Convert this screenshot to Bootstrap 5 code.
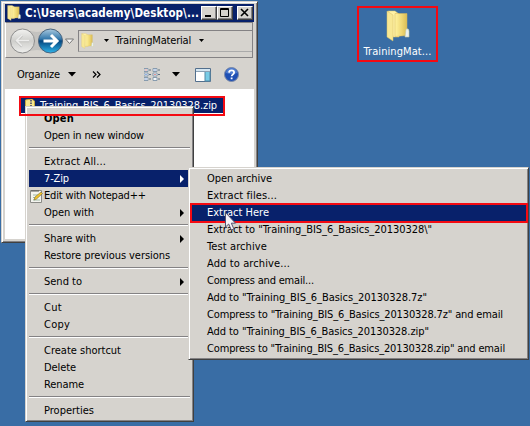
<!DOCTYPE html>
<html lang="en">
<head>
<meta charset="utf-8">
<meta name="viewport" content="width=device-width, initial-scale=1">
<title>Desktop</title>
<link href="https://cdn.jsdelivr.net/npm/bootstrap@5.3.0/dist/css/bootstrap.min.css" rel="stylesheet">
<style>
:root{--face:#d6d3ce;--navy:#08216b;--hot:#f40a12}
body{width:530px;height:426px;background:#396da5;color:#000;font:11px/17px "DejaVu Sans Condensed","DejaVu Sans",sans-serif;font-stretch:condensed;cursor:default}
svg{display:block;flex:none}
.t{white-space:nowrap;display:inline-block}
.explorer{left:1px;top:1px;width:257px;height:242px;background:var(--face);border:1px solid;border-color:#d6d3ce #404040 #404040 #d6d3ce;box-shadow:inset 1px 1px #fff,inset -1px -1px #848284;padding:2px 3px 3px 3px}
.titlebar{height:18px;background:var(--navy);color:#fff;font-weight:700;font-size:11.5px;padding:0 1px 0 2px}
.wbtn{width:16px;height:14px;background:var(--face);border:1px solid;border-color:#fff #404040 #404040 #fff;box-shadow:inset -1px -1px #848284}
.navrow{height:36px;border:1px solid;border-color:#848284 #848284 #848284 #fff;padding-left:3px;margin-right:1px;padding-top:1px}
.address{height:22px;border:1px solid #848284;border-right:0;border-bottom-color:#aaa;padding-left:2px}
.tools{height:31px;padding:2px 15px 0 12px}
.tools .view-arrow{margin:0 15px 0 12px}
.tools .pane{margin-right:13px}
.files{background:#fff;flex:1;padding:8px 0 0 16px}
.picked{width:202px;height:16px;background:var(--navy);color:#fff;line-height:16px;padding-top:2px}
.redframe{border:2px solid var(--hot);z-index:5}
.popup{background:var(--face);border:1px solid;border-color:#d6d3ce #404040 #404040 #d6d3ce;box-shadow:inset 1px 1px #fff,inset -1px -1px #848284;padding:3px 3px 2px}
.context{left:25px;top:106px;width:169px;height:316px}
.sub{left:188px;top:167px;width:341px;height:193px;z-index:2;padding:2px 2px 2px 3px}
.entry{height:17px;padding-left:15px;padding-right:5px;flex:none}
.entry.hot{background:var(--navy);color:#fff}
.rule{height:9px;padding-top:3px;flex:none}
.rule::before{content:"";display:block;height:2px;background:#848284;border-bottom:1px solid #fff}
.note{margin-left:-14px;margin-right:1px}
.shortcut{left:357px;top:6px;width:81px;height:56px;color:#fff;padding-top:2px}
.shortcut .t{margin-top:1px}
.pointer{left:224px;top:211px;z-index:6}
.pick-frame{left:19px;top:96px;width:206px;height:20px}
.row-frame{left:190px;top:203px;width:338px;height:20px}
</style>
<script src="https://cdn.jsdelivr.net/npm/bootstrap@5.3.0/dist/js/bootstrap.bundle.min.js"></script>
</head>
<body class="position-relative overflow-hidden m-0">
<svg width="0" height="0" class="position-absolute">
  <defs>
    <linearGradient id="gold" x1="0" x2="1"><stop offset="0" stop-color="#fff3a0"/><stop offset=".55" stop-color="#efd875"/><stop offset="1" stop-color="#d9bd55"/></linearGradient>
    <linearGradient id="blue" x1="0" y1="0" x2="0" y2="1"><stop offset="0" stop-color="#a9c9df"/><stop offset=".42" stop-color="#3277ab"/><stop offset=".5" stop-color="#064780"/><stop offset="1" stop-color="#2fb4ea"/></linearGradient>
    <linearGradient id="pale" x1="0" y1="0" x2="0" y2="1"><stop offset="0" stop-color="#f3f3f1"/><stop offset=".5" stop-color="#cfcfcc"/><stop offset="1" stop-color="#efefed"/></linearGradient>
    <symbol id="folder" viewBox="0 0 24 32" preserveAspectRatio="none">
      <path d="M2 1h7l4 3v23H7z" fill="#fff2a6" stroke="#d8c06a" stroke-width=".5"/>
      <path d="M9 3.500h12v22l-12 1z" fill="url(#gold)" stroke="#d3b55c" stroke-width=".5"/>
      <path d="M1 1l6 4v26l-6-4z" fill="#f8e894" stroke="#d8c06a" stroke-width=".5"/>
      <path d="M20 19q3-1 3 2v6h-4z" fill="#e8f2f4" stroke="#c7c79a" stroke-width=".6"/>
    </symbol>
  </defs>
</svg>

<main>
<section class="explorer position-absolute d-flex flex-column">
  <header class="titlebar d-flex align-items-center">
    <svg width="14" height="16"><use href="#folder"/></svg>
    <span class="t ms-1" data-w="174">C:\Users\academy\Desktop\...</span>
    <div class="d-flex ms-auto">
      <div class="wbtn"><svg width="14" height="12"><path d="M3 8h6v2H3z"/></svg></div>
      <div class="wbtn"><svg width="14" height="12"><path d="M2.500 1.500h8v8h-8zM2 2.500h9" fill="none" stroke="#000"/></svg></div>
      <div class="wbtn ms-1"><svg width="14" height="12"><path d="M3 2l7 7M10 2l-7 7" stroke="#000" stroke-width="1.600"/></svg></div>
    </div>
  </header>
  <nav class="navrow d-flex align-items-center">
    <svg width="69" height="30" viewBox="0 0 69 30">
      <path d="M14 3q14 6 28 0v24q-14-6-28 0z" fill="#c3c2bf"/>
      <circle cx="13.500" cy="15" r="12" fill="url(#pale)" stroke="#8d8d8d"/>
      <path d="M20 15H8m5-5.500L7.500 15l5.500 5.500" fill="none" stroke="#c2c2c0" stroke-width="2.500"/>
      <path d="M20 14.500H8m5-5.500l-5.500 5.500 5.500 5.500" fill="none" stroke="#ededec" stroke-width="1.600"/>
      <circle cx="41.500" cy="15" r="12" fill="url(#blue)" stroke="#47627d"/>
      <path d="M34.500 15H47m-5-6l6 6-6 6" fill="none" stroke="#fff" stroke-width="3"/>
      <path d="M56.500 13h8l-4 4.500z" fill="#f8f8f8" stroke="#777"/>
    </svg>
    <div class="address d-flex align-items-center flex-fill">
      <svg width="13" height="16"><use href="#folder"/></svg>
      <svg class="ms-2" width="9" height="4" viewBox="-2 0 9 4"><path d="M0 0h5L2.500 3z"/></svg>
      <span class="t ms-1" data-w="76">TrainingMaterial</span>
      <svg class="ms-2" width="5" height="4"><path d="M0 0h5L2.500 3z"/></svg>
    </div>
  </nav>
  <div class="tools d-flex align-items-center">
    <span class="t" data-w="43">Organize</span>
    <svg class="ms-2 me-3" width="8" height="5"><path d="M0 0h8L4 4.500z"/></svg>
    <svg width="9" height="7"><path d="M1 .5l3 3-3 3M5 .5l3 3-3 3" fill="none" stroke="#000" stroke-width="1.200"/></svg>
    <svg class="ms-auto" width="16" height="13">
      <path d="M0 .5h4v3H0zm0 4.500h4v3H0zm0 4.500h4v3H0zM9 .5h4v3H9zM9 5h4v3H9zm0 4.500h4v3H9z" fill="#f4f7fa" stroke="#7d93a8" stroke-width=".9"/>
      <path d="M5 2h2M5 6.500h2M5 11h2M14 2h2M14 6.500h2M14 11h2" stroke="#5b7286"/>
      <path d="M1.500 2h1M10.500 6.500h1" stroke="#c33"/><path d="M1.500 6.500h1M10.500 2h1M1.500 11h1" stroke="#36c"/>
    </svg>
    <svg class="view-arrow" width="8" height="5"><path d="M0 0h8L4 4.500z"/></svg>
    <svg class="pane" width="16" height="14"><path d="M.5.5h15v13H.5z" fill="#fff" stroke="#526f8d"/><path d="M1 1h14v2H1z" fill="#d5e6f1"/><path d="M10 3.500h5v9.500h-5z" fill="#78cbe5" stroke="#5489a5"/><path d="M1 3.500h14" stroke="#8aa0b4"/></svg>
    <svg width="15" height="15"><circle cx="7.500" cy="7.500" r="7" fill="#1f50b4" stroke="#7b8aa8"/><path d="M2 6a5.500 5 0 0 1 11 0q-5 2-11 0" fill="#6f9be4" opacity=".6"/><path d="M5 5.700q.2-2.300 2.600-2.300 2.500 0 2.500 2 0 1.200-1.300 2-1.100.7-1.100 1.800M7.600 10.500v1.700" fill="none" stroke="#fff" stroke-width="1.800"/></svg>
  </div>
  <div class="files">
    <div class="picked d-flex align-items-center">
      <svg class="ms-1" width="11" height="15"><path d="M.5 1l6-1 3 2v12l-5 1-4-2z" fill="#f8e78d" stroke="#c4a642"/><path d="M6 1v13" stroke="#667" stroke-dasharray="1.500 1" stroke-width="2"/></svg>
      <span class="t ms-1" data-w="177">Training_BIS_6_Basics_20130328.zip</span>
    </div>
  </div>
</section>

<div class="redframe position-absolute pick-frame"></div>

<div class="context popup position-absolute d-flex flex-column">
  <div class="entry fw-bold"><span class="t" data-w="30">Open</span></div>
  <div class="entry"><span class="t" data-w="100">Open in new window</span></div>
  <div class="rule"></div>
  <div class="entry"><span class="t" data-w="62">Extract All...</span></div>
  <div class="entry hot d-flex align-items-center justify-content-between"><span class="t" data-w="25">7-Zip</span><svg width="5" height="8"><path d="M0 0v8l4-4z" fill="#fff"/></svg></div>
  <div class="entry d-flex align-items-center"><svg class="note" width="13" height="14"><path d="M.5 1.500h11v12H.5z" fill="#f4f4ef" stroke="#8a8a86"/><path d="M2 1v2m2-2v2m2-2v2m2-2v2" stroke="#555"/><path d="M3 6h6M3 8.500h5M3 11h7" stroke="#9fb8a5"/><path d="M4 11l1-3 6-5 1.500 1.500-6 5.500z" fill="#f2c52c" stroke="#7b6b34" stroke-width=".6"/></svg><span class="t" data-w="102">Edit with Notepad++</span></div>
  <div class="entry d-flex align-items-center justify-content-between"><span class="t" data-w="50">Open with</span><svg width="5" height="8"><path d="M0 0v8l4-4z"/></svg></div>
  <div class="rule"></div>
  <div class="entry d-flex align-items-center justify-content-between"><span class="t" data-w="52">Share with</span><svg width="5" height="8"><path d="M0 0v8l4-4z"/></svg></div>
  <div class="entry"><span class="t" data-w="126">Restore previous versions</span></div>
  <div class="rule"></div>
  <div class="entry d-flex align-items-center justify-content-between"><span class="t" data-w="38">Send to</span><svg width="5" height="8"><path d="M0 0v8l4-4z"/></svg></div>
  <div class="rule"></div>
  <div class="entry"><span class="t" data-w="18">Cut</span></div>
  <div class="entry"><span class="t" data-w="26">Copy</span></div>
  <div class="rule"></div>
  <div class="entry"><span class="t" data-w="77">Create shortcut</span></div>
  <div class="entry"><span class="t" data-w="32">Delete</span></div>
  <div class="entry"><span class="t" data-w="40">Rename</span></div>
  <div class="rule"></div>
  <div class="entry"><span class="t" data-w="50">Properties</span></div>
</div>

<div class="sub popup position-absolute">
  <div class="entry"><span class="t" data-w="65">Open archive</span></div>
  <div class="entry"><span class="t" data-w="70">Extract files...</span></div>
  <div class="entry hot"><span class="t" data-w="62">Extract Here</span></div>
  <div class="entry"><span class="t" data-w="225">Extract to "Training_BIS_6_Basics_20130328\"</span></div>
  <div class="entry"><span class="t" data-w="60">Test archive</span></div>
  <div class="entry"><span class="t" data-w="83">Add to archive...</span></div>
  <div class="entry"><span class="t" data-w="107">Compress and email...</span></div>
  <div class="entry"><span class="t" data-w="220">Add to "Training_BIS_6_Basics_20130328.7z"</span></div>
  <div class="entry"><span class="t" data-w="296">Compress to "Training_BIS_6_Basics_20130328.7z" and email</span></div>
  <div class="entry"><span class="t" data-w="222">Add to "Training_BIS_6_Basics_20130328.zip"</span></div>
  <div class="entry"><span class="t" data-w="298">Compress to "Training_BIS_6_Basics_20130328.zip" and email</span></div>
</div>
<div class="redframe position-absolute row-frame"></div>

<div class="shortcut redframe position-absolute d-flex flex-column align-items-center">
  <svg width="24" height="32"><use href="#folder"/></svg>
  <span class="t" data-w="68">TrainingMat...</span>
</div>

<svg class="pointer position-absolute" width="13" height="21" viewBox="0 0 13 21"><path d="M1.500 1.500v14.500l3.200-3 2.600 6 2.600-1.100-2.600-5.700h4.200z" fill="#f5f3f8" stroke="#55536f"/></svg>
</main>
<script>
// Tighten or loosen each label so it fills its nominal width.
document.querySelectorAll('[data-w]').forEach(function (el) {
  var gap = (el.dataset.w - el.getBoundingClientRect().width) / el.textContent.length;
  el.style.letterSpacing = gap.toFixed(3) + 'px';
});
</script>
</body>
</html>
